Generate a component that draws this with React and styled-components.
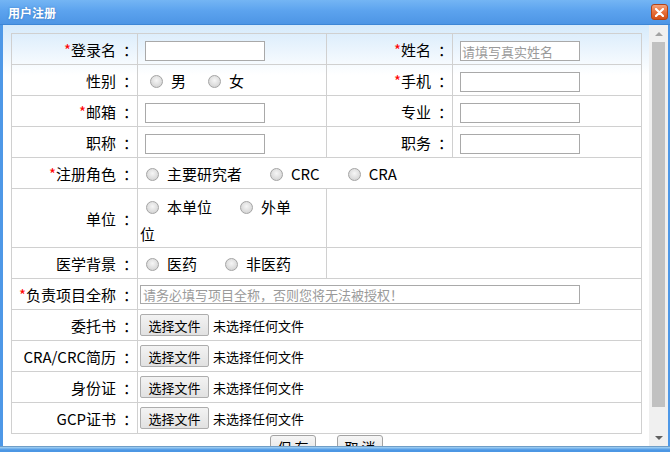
import React from "react";
import styled, { createGlobalStyle } from "styled-components";

const GlobalStyle = createGlobalStyle`
  html, body { margin: 0; padding: 0; background: #fff; }
  body { font-family: "Noto Sans CJK SC", "Noto Sans", sans-serif; }
  * { box-sizing: border-box; }
`;

// label text with the wide, right-set colon of the original font
const L = ({ req, children }) => (
  <Label>
    {req && <Req>*</Req>}
    {children}
    <Colon>：</Colon>
  </Label>
);

export default function App() {
  return (
    <>
      <GlobalStyle />
      <Window>
        <TitleBar>
          <Title>用户注册</Title>
          <CloseBtn aria-label="close">
            <svg width="9" height="9" viewBox="0 0 9 9">
              <path d="M1 1L8 8M8 1L1 8" stroke="#fff" strokeWidth="2.2" strokeLinecap="round" />
            </svg>
          </CloseBtn>
        </TitleBar>

        <Main>
          <Content>
            <FormGrid>
              <L req>登录名</L>
              <Field><TextInput /></Field>
              <L req>姓名</L>
              <Field><TextInput placeholder="请填写真实姓名" /></Field>

              <L>性别</L>
              <Field>
                <Option $indent={10} $after={12}><Radio />男</Option>
                <Option $indent={10}><Radio />女</Option>
              </Field>
              <L req>手机</L>
              <Field><TextInput /></Field>

              <L req>邮箱</L>
              <Field><TextInput /></Field>
              <L>专业</L>
              <Field><TextInput /></Field>

              <L>职称</L>
              <Field><TextInput /></Field>
              <L>职务</L>
              <Field><TextInput /></Field>

              <L req>注册角色</L>
              <Field $span={3}>
                <Option><Radio />主要研究者</Option>
                <Option><Radio />CRC</Option>
                <Option><Radio />CRA</Option>
              </Field>

              <L>单位</L>
              <WrapField>
                <Option><Radio />本单位</Option>
                <Option><Radio />外单位</Option>
              </WrapField>
              <Field $span={2} />

              <L>医学背景</L>
              <Field>
                <Option><Radio />医药</Option>
                <Option><Radio />非医药</Option>
              </Field>
              <Field $span={2} />

              <L req>负责项目全称</L>
              <Field $span={3}>
                <LongInput placeholder="请务必填写项目全称，否则您将无法被授权！" />
              </Field>

              {["委托书", "CRA/CRC简历", "身份证", "GCP证书"].map((l) => (
                <React.Fragment key={l}>
                  <L>{l}</L>
                  <Field $span={3}>
                    <FileBtn>选择文件</FileBtn>
                    <FileName>未选择任何文件</FileName>
                  </Field>
                </React.Fragment>
              ))}
            </FormGrid>

            <Actions>
              <ActionBtn>保 存</ActionBtn>
              <ActionBtn>取 消</ActionBtn>
            </Actions>
          </Content>

          <Scrollbar>
            <ArrowBox><ArrowUp /></ArrowBox>
            <Thumb />
            <Track />
            <ArrowBox><ArrowDown /></ArrowBox>
          </Scrollbar>
        </Main>

        <BottomEdge />
      </Window>
    </>
  );
}

const Window = styled.div`
  width: 670px;
  height: 452px;
  display: flex;
  flex-direction: column;
  overflow: hidden;
  background: #4e98e7;
`;

const TitleBar = styled.div`
  height: 25px;
  flex: none;
  display: flex;
  align-items: center;
  justify-content: space-between;
  padding: 0 2px 0 8px;
  background: linear-gradient(#74b5f4, #5ca3ee 45%, #4d95e5);
  border-bottom: 1px solid #3d86d6;
`;

const Title = styled.span`
  color: #fff;
  font-size: 12px;
  font-weight: 700;
  text-shadow: 0 0 2px rgba(30, 80, 150, 0.5);
`;

const CloseBtn = styled.button`
  width: 17px;
  height: 16px;
  padding: 0;
  display: flex;
  align-items: center;
  justify-content: center;
  border: 1px solid #b24418;
  border-radius: 3px;
  background: linear-gradient(#f6a37a, #e8703a 50%, #d54f14);
`;

const Main = styled.div`
  flex: 1;
  display: flex;
  min-height: 0;
  border-left: 3px solid #4e98e7;
  border-right: 2px solid #4e98e7;
`;

const Content = styled.div`
  flex: 1;
  overflow: hidden;
  padding: 8px 0 0 8px;
  background: linear-gradient(#d6eafb 0, #ffffff 50px);
`;

const FormGrid = styled.div`
  width: 631px;
  display: grid;
  grid-template-columns: 126px 189px 126px 189px;
  grid-template-rows: repeat(5, 31px) 59px repeat(6, 31px);
  border-top: 1px solid #d0d0d0;
  border-left: 1px solid #d0d0d0;
  font-size: 15px;
  color: #000;
`;

const Cell = styled.div`
  border-right: 1px solid #d0d0d0;
  border-bottom: 1px solid #d0d0d0;
`;

const Label = styled(Cell)`
  display: flex;
  align-items: center;
  justify-content: flex-end;
  padding-right: 6px;
  white-space: nowrap;
`;

const Req = styled.span`
  color: #f00;
`;

const Colon = styled.span`
  display: inline-block;
  width: 15px;
  padding-left: 7px;
  overflow: visible;
`;

const Field = styled(Cell)`
  grid-column: span ${(p) => p.$span || 1};
  display: flex;
  align-items: center;
  padding-left: 2px;
  white-space: nowrap;
`;

const WrapField = styled(Cell)`
  padding: 4px 28px 0 2px;
  line-height: 27px;
`;

const Option = styled.span`
  margin-right: ${(p) => (p.$after ?? 22)}px;

  & > span {
    margin-left: ${(p) => (p.$indent ?? 6)}px;
  }
`;

const Radio = styled.span`
  display: inline-block;
  width: 13px;
  height: 13px;
  margin-right: 8px;
  vertical-align: -1px;
  border-radius: 50%;
  border: 1px solid #a4a4a4;
  background: radial-gradient(circle at 50% 40%, #f6f6f6, #d6d6d6 75%);
`;

const TextInput = styled.input.attrs({ type: "text" })`
  width: 120px;
  height: 20px;
  margin: 4px 0 0 5px;
  padding: 0 1px;
  border: 1px solid #a9a9a9;
  font: 13px "Noto Sans CJK SC", sans-serif;
  color: #000;
  outline: none;

  &::placeholder {
    color: #9a9a9a;
  }
`;

const LongInput = styled(TextInput)`
  width: 440px;
  height: 19px;
  margin: 0;
  padding: 0 2px;
`;

const FileBtn = styled.button`
  width: 69px;
  height: 22px;
  padding: 0;
  border: 1px solid #adadad;
  border-radius: 2px;
  background: linear-gradient(#f3f3f3, #e1e1e1);
  font: 13px "Noto Sans CJK SC", sans-serif;
  color: #000;
`;

const FileName = styled.span`
  margin-left: 4px;
  font-size: 13px;
`;

const Actions = styled.div`
  width: 631px;
  display: flex;
  justify-content: center;
  gap: 21px;
  padding-top: 1px;
`;

const ActionBtn = styled.button`
  width: 46px;
  height: 24px;
  padding: 0;
  border: 1px solid #a3a3a3;
  border-radius: 3px;
  background: linear-gradient(#f6f6f6, #dedede);
  font: 14px "Noto Sans CJK SC", sans-serif;
  color: #000;
`;

const Scrollbar = styled.div`
  width: 19px;
  flex: none;
  display: flex;
  flex-direction: column;
  align-items: center;
  background: #f0f0f0;
`;

const ArrowBox = styled.div`
  height: 17px;
  width: 100%;
  display: flex;
  align-items: center;
  justify-content: center;
  flex: none;
`;

const ArrowUp = styled.div`
  border-left: 4px solid transparent;
  border-right: 4px solid transparent;
  border-bottom: 4px solid #a3a3a3;
`;

const ArrowDown = styled.div`
  border-left: 4px solid transparent;
  border-right: 4px solid transparent;
  border-top: 4px solid #606060;
`;

const Thumb = styled.div`
  width: 13px;
  height: 365px;
  flex: none;
  background: #c1c1c1;
`;

const Track = styled.div`
  flex: 1;
`;

const BottomEdge = styled.div`
  height: 6px;
  flex: none;
  border-top: 1px solid #6f9ec8;
  background: linear-gradient(#a6d3f4, #4c97e4 60%);
`;
